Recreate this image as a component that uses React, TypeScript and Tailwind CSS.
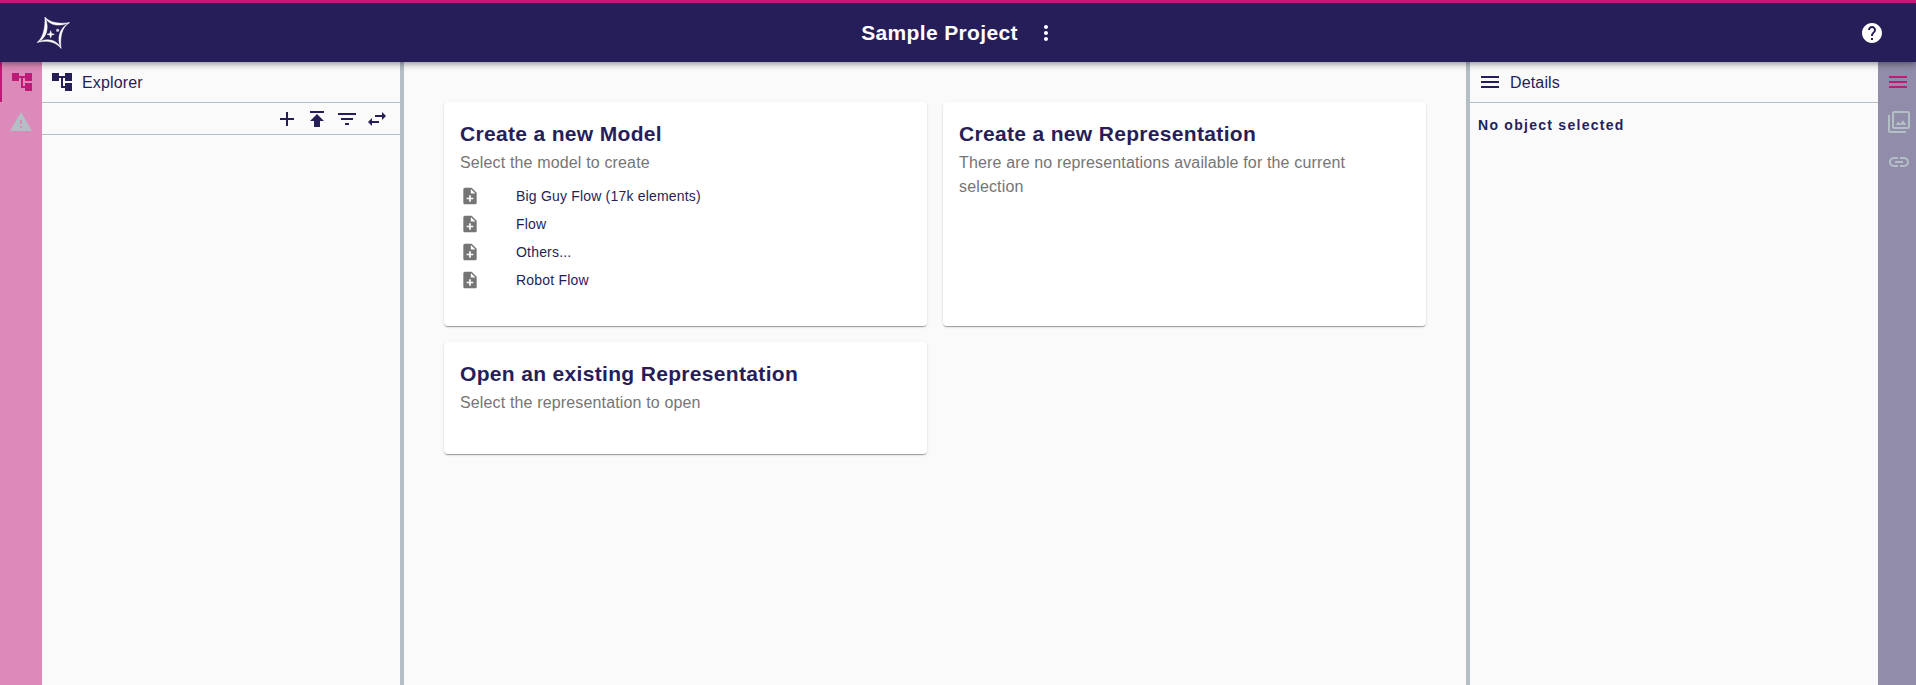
import type { ReactNode } from 'react';
import {
  MdAccountTree,
  MdAdd,
  MdFilterList,
  MdHelp,
  MdLink,
  MdMenu,
  MdMoreVert,
  MdNoteAdd,
  MdOutlineFilter,
  MdPublish,
  MdSwapHoriz,
  MdWarning,
} from 'react-icons/md';

const models = ['Big Guy Flow (17k elements)', 'Flow', 'Others...', 'Robot Flow'];

function Logo() {
  return (
    <svg width="34" height="34" viewBox="0 0 102 102" fill="#fff" stroke="#fff" strokeWidth="1.5" strokeLinejoin="round">
      <path d="M27 4C41 19 66 25 100 20C68 33 39 29 27 4Z" />
      <path d="M100 20C76 35 72 64 75 97C61 66 71 34 100 20Z" />
      <path d="M75 97C59 77 34 72 4 79C34 64 63 71 75 97Z" />
      <path d="M4 79C20 67 28 39 27 4C42 37 30 69 4 79Z" />
      <path d="M44 44L46.500 52.500L55 55L46.500 57.500L44 66L41.500 57.500L33 55L41.500 52.500Z" />
      <circle cx="65" cy="43" r="4" opacity=".8" />
    </svg>
  );
}

function Card({ title, subtitle, className, children }: { title: string; subtitle: string; className: string; children?: ReactNode }) {
  return (
    <section
      className={`rounded bg-white p-4 shadow-[0_2px_1px_-1px_rgba(0,0,0,0.2),0_1px_1px_0_rgba(0,0,0,0.14),0_1px_3px_0_rgba(0,0,0,0.12)] ${className}`}
    >
      <h2 className="text-[21px] leading-8 font-bold tracking-[0.33px]">{title}</h2>
      <p className="pt-px text-base leading-6 tracking-[0.15px] text-[#757575]">{subtitle}</p>
      {children}
    </section>
  );
}

export default function App() {
  return (
    <div className="flex h-screen flex-col overflow-hidden bg-[#fafafa] font-['Liberation_Sans',Arial,sans-serif] text-[#261e58]">
      <header className="z-10 grid h-[62px] shrink-0 grid-cols-[1fr_auto_1fr] items-center border-t-[3px] border-[#be1a78] bg-[#261e58] text-white shadow-[0_2px_4px_-1px_rgba(0,0,0,0.2),0_4px_5px_0_rgba(0,0,0,0.14),0_1px_10px_0_rgba(0,0,0,0.12)]">
        <div className="pl-9">
          <Logo />
        </div>
        <div className="flex items-center gap-4 pl-[3px]">
          <h1 className="text-[21px] leading-8 font-bold tracking-[0.35px]">Sample Project</h1>
          <MdMoreVert size={24} />
        </div>
        <div className="flex justify-end pr-8">
          <MdHelp size={24} />
        </div>
      </header>

      <div className="flex min-h-0 flex-1">
        <nav className="flex w-[42px] shrink-0 flex-col bg-[#dc8ab9]">
          <button className="flex h-10 items-center justify-center border-l-2 border-[#be1a78] text-[#be1a78]">
            <MdAccountTree size={24} />
          </button>
          <button className="flex h-10 items-center justify-center text-[#b3bfc5]">
            <MdWarning size={24} />
          </button>
        </nav>

        <aside className="w-[358px] shrink-0">
          <div className="flex h-[41px] items-center gap-2 border-b border-[#b3bfc5] pl-2">
            <MdAccountTree size={24} />
            <span className="pt-0.5 text-base tracking-[0.15px]">Explorer</span>
          </div>
          <div className="flex h-8 items-center justify-end gap-1.5 border-b border-[#b3bfc5] pr-[11px]">
            <MdAdd size={24} />
            <MdPublish size={24} />
            <MdFilterList size={24} />
            <MdSwapHoriz size={24} />
          </div>
        </aside>
        <div className="w-1 shrink-0 bg-[#b3bfc5]" />

        <main className="grid min-w-0 flex-1 grid-cols-2 content-start gap-4 p-10">
          <Card title="Create a new Model" subtitle="Select the model to create" className="h-[224px]">
            <ul className="pt-[7px]">
              {models.map((model) => (
                <li key={model} className="flex h-7 items-center gap-9">
                  <MdNoteAdd size={20} className="text-[#757575]" />
                  <span className="text-sm tracking-[0.19px]">{model}</span>
                </li>
              ))}
            </ul>
          </Card>
          <Card
            title="Create a new Representation"
            subtitle="There are no representations available for the current selection"
            className="h-[224px]"
          />
          <Card title="Open an existing Representation" subtitle="Select the representation to open" className="h-[112px]" />
        </main>

        <div className="w-1 shrink-0 bg-[#b3bfc5]" />
        <aside className="w-[408px] shrink-0">
          <div className="flex h-[41px] items-center gap-2 border-b border-[#b3bfc5] pl-2">
            <MdMenu size={24} />
            <span className="pt-0.5 text-base tracking-[0.15px]">Details</span>
          </div>
          <p className="px-2 pt-[11px] text-sm leading-[22px] font-bold tracking-[1.27px]">No object selected</p>
        </aside>
        <nav className="-mr-1 flex w-[42px] shrink-0 flex-col bg-[#908ca9]">
          <button className="flex h-10 items-center justify-center border-r-2 border-[#be1a78] text-[#be1a78]">
            <MdMenu size={24} />
          </button>
          <button className="flex h-10 items-center justify-center text-[#b3bfc5]">
            <MdOutlineFilter size={24} />
          </button>
          <button className="flex h-10 items-center justify-center text-[#b3bfc5]">
            <MdLink size={24} />
          </button>
        </nav>
      </div>
    </div>
  );
}
